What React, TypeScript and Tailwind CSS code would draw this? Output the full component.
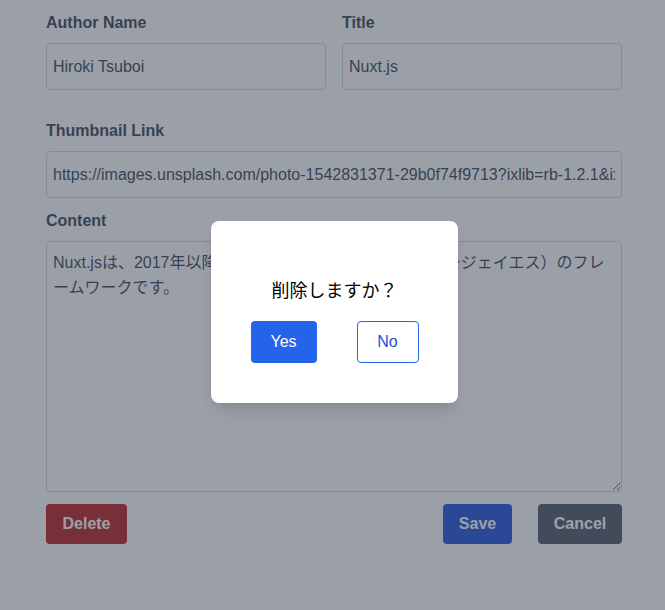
import React from "react";

export default function App() {
  const url =
    "https://images.unsplash.com/photo-1542831371-29b0f74f9713?ixlib=rb-1.2.1&ixid=eyJhcHBfaWQiOjEyMDd9&auto=format&fit=crop&w=1350&q=80";
  const content =
    "Nuxt.jsは、2017年以降人気の Vue.js ベース（ナクストージェイエス）のフレ\nームワークです。";
  return (
    <div className="relative min-h-[610px] w-full bg-white font-['Liberation_Sans','Noto_Sans_CJK_JP',sans-serif] text-[#374151]">
      <div className="ml-[46px] w-[576px] pt-[11px]">
        <div className="grid grid-cols-2 gap-4">
          <div>
            <label className="mb-2 block text-base leading-6 font-bold text-[#374151]">
              Author Name
            </label>
            <input
              readOnly
              value="Hiroki Tsuboi"
              className="block h-[47px] w-full rounded border border-[#d1d5db] px-[6px] text-base text-[#374151] outline-none"
            />
          </div>
          <div>
            <label className="mb-2 block text-base leading-6 font-bold text-[#374151]">
              Title
            </label>
            <input
              readOnly
              value="Nuxt.js"
              className="block h-[47px] w-full rounded border border-[#d1d5db] px-[6px] text-base text-[#374151] outline-none"
            />
          </div>
        </div>
        <div className="mt-[29px]">
          <label className="mb-2 block text-base leading-6 font-bold text-[#374151]">
            Thumbnail Link
          </label>
          <input
            readOnly
            value={url}
            className="block h-[47px] w-full rounded border border-[#d1d5db] px-[6px] text-base text-[#374151] outline-none"
          />
        </div>
        <div className="mt-[11px]">
          <label className="mb-2 block text-base leading-6 font-bold text-[#374151]">
            Content
          </label>
          <textarea
            readOnly
            value={content}
            className="block h-[251px] w-full rounded border border-[#d1d5db] px-[6px] py-2 text-base leading-[25px] text-[#374151] outline-none"
          />
        </div>
        <div className="mt-3 flex items-center">
          <button className="h-10 w-[81px] rounded bg-[#b91c1c] text-base font-bold text-white">
            Delete
          </button>
          <div className="flex-1" />
          <button className="h-10 w-[69px] rounded bg-[#1d4ed8] text-base font-bold text-white">
            Save
          </button>
          <button className="ml-[26px] h-10 w-[84px] rounded bg-[#4b5563] text-base font-bold text-white">
            Cancel
          </button>
        </div>
      </div>

      <div className="absolute inset-0 flex items-start justify-center bg-[#374151]/50 pt-[221px] pl-[4px]">
        <div className="flex h-[182px] w-[247px] flex-col items-center rounded-lg bg-white pt-[56px] shadow-lg">
          <p className="text-lg leading-7 text-black">削除しますか？</p>
          <div className="mt-4 flex gap-10">
            <button className="h-[42px] w-[66px] rounded bg-[#2563eb] text-base text-white">
              Yes
            </button>
            <button className="h-[42px] w-[62px] rounded border border-[#2563eb] bg-white text-base text-[#1d4ed8]">
              No
            </button>
          </div>
        </div>
      </div>
    </div>
  );
}
